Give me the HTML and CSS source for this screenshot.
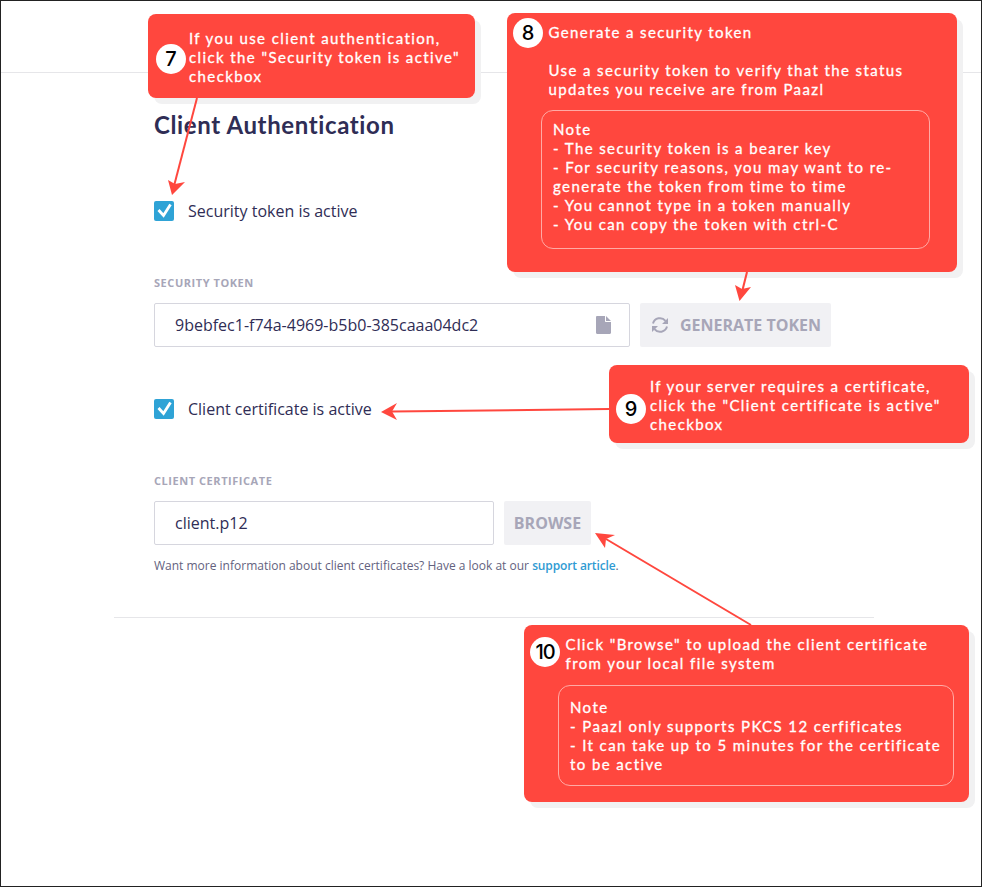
FILE: index.html
```html
<!DOCTYPE html>
<html lang="en">
<head>
<meta charset="utf-8">
<title>Client Authentication</title>
<link rel="stylesheet" href="styles.css">
</head>
<body>
<div class="frame">
  <header class="topbar"></header>
  <main class="content">
    <h2 class="title">Client Authentication</h2>
    <label class="check check-first">
      <span class="box"><svg viewBox="0 0 20 20" width="20" height="20"><path d="M4.500 9 9.500 14.500 16.500 3.500" fill="none" stroke="#fff" stroke-width="2.800"/></svg></span>
      <span>Security token is active</span>
    </label>
    <div class="field-label label-token">SECURITY TOKEN</div>
    <div class="row">
      <div class="input input-token">
        <span>9bebfec1-f74a-4969-b5b0-385caaa04dc2</span>
        <svg class="file" viewBox="0 0 15 18" width="15" height="18"><path d="M0 1.2C0 .5.5 0 1.2 0H9v5c0 .6.4 1 1 1h5v10.8c0 .7-.5 1.2-1.200 1.200H1.200C.5 18 0 17.500 0 16.800ZM10 0l5 5h-5Z" fill="#a7a6b8"/></svg>
      </div>
      <div class="btn btn-token">
        <svg viewBox="0 0 20 20" width="20" height="20"><g fill="none" stroke="#a7a6b8" stroke-width="2"><path d="M3 8.500A7.200 7.200 0 0 1 15.500 5.800"/><path d="M17 11.500A7.200 7.200 0 0 1 4.500 14.200"/></g><path d="M18 3v6h-6ZM2 17v-6h6Z" fill="#a7a6b8"/></svg>
        <span>GENERATE TOKEN</span>
      </div>
    </div>
    <label class="check check-second">
      <span class="box"><svg viewBox="0 0 20 20" width="20" height="20"><path d="M4.500 9 9.500 14.500 16.500 3.500" fill="none" stroke="#fff" stroke-width="2.800"/></svg></span>
      <span>Client certificate is active</span>
    </label>
    <div class="field-label label-cert">CLIENT CERTIFICATE</div>
    <div class="row">
      <div class="input input-cert"><span>client.p12</span></div>
      <div class="btn btn-browse"><span>BROWSE</span></div>
    </div>
    <p class="help">Want more information about client certificates? Have a look at our <a href="#">support article</a>.</p>
  </main>
  <hr class="divider">

  <aside class="callout c7">
    <span class="num n7">7</span>
    <p>If you use client authentication,<br>click the "Security token is active"<br>checkbox</p>
  </aside>
  <aside class="callout c8">
    <span class="num n8">8</span>
    <p>Generate a security token</p>
    <p class="gap">Use a security token to verify that the status<br>updates you receive are from Paazl</p>
    <div class="note note8">Note<br>- The security token is a bearer key<br>- For security reasons, you may want to re-<br>generate the token from time to time<br>- You cannot type in a token manually<br>- You can copy the token with ctrl-C</div>
  </aside>
  <aside class="callout c9">
    <span class="num n9">9</span>
    <p>If your server requires a certificate,<br>click the "Client certificate is active"<br>checkbox</p>
  </aside>
  <aside class="callout c10">
    <span class="num n10">10</span>
    <p>Click "Browse" to upload the client certificate<br>from your local file system</p>
    <div class="note note10">Note<br>- Paazl only supports PKCS 12 cerfificates<br>- It can take up to 5 minutes for the certificate<br>to be active</div>
  </aside>

  <svg class="arrows" viewBox="0 0 982 887" width="982" height="887">
    <g fill="none" stroke="#ff473e" stroke-width="2">
      <path d="M197 98 174 186"/>
      <path d="M747 272 742 292"/>
      <path d="M609 409 392 411.500"/>
      <path d="M751 625 606 539"/>
    </g>
    <g fill="#ff473e">
      <path d="M172 195 168 180 175 184 185 182Z"/>
      <path d="M739.500 301 735 285 742 289 751 287Z"/>
      <path d="M381 412 397 403 392 411.500 397 420Z"/>
      <path d="M595 533 615 535 606 539 605 548Z"/>
    </g>
  </svg>
</div>
</body>
</html>
```
FILE: styles.css
```css
* { box-sizing: border-box; }
html, body { margin: 0; padding: 0; background: #fff; }
body { width: 982px; height: 887px; overflow: hidden; font-family: "Open Sans", sans-serif; color: #2f2d55; }
.frame { position: relative; width: 982px; height: 887px; border: 1px solid #222; background: #fff; overflow: hidden; }
.topbar { height: 72px; border-bottom: 1px solid #e6e6e9; }
.content { padding: 0 0 0 153px; }
.title { margin: 37px 0 0; font: 700 24px/30px "Lato", sans-serif; color: #2f2d55; letter-spacing: .62px; }
.check { display: flex; align-items: center; gap: 14px; font-size: 16px; line-height: 20px; }
.check-first { margin-top: 61px; }
.check-second { margin-top: 52px; }
.box { display: block; width: 20px; height: 20px; background: #2fa3d6; border-radius: 2px; }
.box svg { display: block; }
.field-label { font-size: 11px; line-height: 14px; font-weight: 700; color: #a7a6b8; letter-spacing: .55px; }
.label-token { margin-top: 55px; }
.label-cert { margin-top: 55px; }
.row { display: flex; gap: 10px; margin-top: 13px; height: 44px; }
.input { display: flex; align-items: center; justify-content: space-between; height: 44px; padding: 0 18px 0 20px; border: 1px solid #d6d6de; border-radius: 2px; font-size: 16px; background: #fff; }
.input-token { width: 476px; }
.input-cert { width: 340px; }
.btn { display: flex; align-items: center; justify-content: center; gap: 10px; height: 44px; background: #f1f1f4; border-radius: 2px; font-size: 16px; font-weight: 700; color: #a7a6b8; }
.btn-token { width: 191px; }
.btn-browse { width: 87px; }
.btn svg, .input svg { display: block; flex: none; }
.help { margin: 12px 0 0; font-size: 12px; line-height: 17px; color: #63627e; }
.help a { color: #2f9bd3; font-weight: 600; text-decoration: none; letter-spacing: -.12px; }
.divider { position: absolute; left: 113px; top: 616px; width: 760px; height: 1px; margin: 0; border: 0; background: #e6e6e9; }
.arrows { position: absolute; left: -1px; top: -1px; display: block; }
.callout { position: absolute; background: #ff473e; border-radius: 8px; box-shadow: 6px 6px 0 #f1f1f2; color: #fff; font: 400 15px/19px "Lato", sans-serif; letter-spacing: 1.400px; -webkit-text-stroke: .3px #fff; }
.callout p { margin: 0; white-space: nowrap; }
.c7 { left: 147px; top: 13px; width: 327px; height: 84px; padding: 15px 0 0 41px; }
.c8 { left: 506px; top: 12px; width: 450px; height: 259px; padding: 10px 0 0 41.500px; }
.c9 { left: 608px; top: 364px; width: 360px; height: 78px; padding: 12px 0 0 41px; }
.c10 { left: 523px; top: 624px; width: 445px; height: 177px; padding: 10px 0 0 41.500px; }
.gap { margin-top: 19px !important; }
.num { position: absolute; display: flex; align-items: center; justify-content: center; width: 30px; height: 30px; border-radius: 50%; background: #fff; color: #000; font: 500 20px/30px "Inter", sans-serif; letter-spacing: 0; -webkit-text-stroke: 0; }
.n7 { left: 8px; top: 30px; }
.n8 { left: 6px; top: 5px; }
.n9 { left: 7px; top: 29px; }
.n10 { left: 6px; top: 12px; letter-spacing: -1px; }
.note { position: absolute; border: 1px solid #ffaaa5; border-radius: 12px; white-space: nowrap; }
.note8 { left: 34px; top: 97px; width: 389px; height: 139px; padding: 9px 0 0 11px; }
.note10 { left: 34px; top: 60px; width: 396px; height: 101px; padding: 12px 0 0 11px; }
```
